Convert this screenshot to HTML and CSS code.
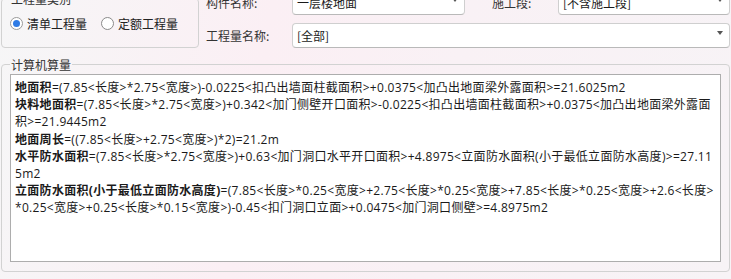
FILE: index.html
```html
<!DOCTYPE html>
<html lang="zh-CN">
<head>
    <meta charset="UTF-8">
    <meta name="viewport" content="width=device-width, initial-scale=1.0">
    <title>计算机算量</title>
    <link rel="stylesheet" href="styles.css">
</head>
<body>
    <div class="top">
        <fieldset class="group kind">
            <legend>工程量类别</legend>
            <div class="radios">
                <label class="radio checked"><span class="dot"></span>清单工程量</label>
                <label class="radio"><span class="dot"></span>定额工程量</label>
            </div>
        </fieldset>

        <div class="fields">
            <span class="label">构件名称:</span>
            <div class="combo part"><span>一层楼地面</span><i class="arrow"></i></div>
            <span class="label stage-label">施工段:</span>
            <div class="combo stage"><span>[不含施工段]</span><i class="arrow"></i></div>

            <span class="label">工程量名称:</span>
            <div class="combo wide"><span>[全部]</span><i class="arrow"></i></div>
        </div>
    </div>

    <fieldset class="group calc">
        <legend>计算机算量</legend>
        <div class="output">
            <p><b>地面积</b>=(7.85&lt;长度&gt;*2.75&lt;宽度&gt;)-0.0225&lt;扣凸出墙面柱截面积&gt;+0.0375&lt;加凸出地面梁外露面积&gt;=21.6025m2</p>
            <p><b>块料地面积</b>=(7.85&lt;长度&gt;*2.75&lt;宽度&gt;)+0.342&lt;加门侧壁开口面积&gt;-0.0225&lt;扣凸出墙面柱截面积&gt;+0.0375&lt;加凸出地面梁外露面积&gt;=21.9445m2</p>
            <p><b>地面周长</b>=((7.85&lt;长度&gt;+2.75&lt;宽度&gt;)*2)=21.2m</p>
            <p><b>水平防水面积</b>=(7.85&lt;长度&gt;*2.75&lt;宽度&gt;)+0.63&lt;加门洞口水平开口面积&gt;+4.8975&lt;立面防水面积(小于最低立面防水高度)&gt;=27.115m2</p>
            <p><b>立面防水面积(小于最低立面防水高度)</b>=(7.85&lt;长度&gt;*0.25&lt;宽度&gt;+2.75&lt;长度&gt;*0.25&lt;宽度&gt;+7.85&lt;长度&gt;*0.25&lt;宽度&gt;+2.6&lt;长度&gt;*0.25&lt;宽度&gt;+0.25&lt;长度&gt;*0.15&lt;宽度&gt;)-0.45&lt;扣门洞口立面&gt;+0.0475&lt;加门洞口侧壁&gt;=4.8975m2</p>
        </div>
    </fieldset>
</body>
</html>
```

FILE: styles.css
```css
body {
    margin: 0;
    width: 731px;
    height: 279px;
    overflow: hidden;
    font-family: 'Noto Sans CJK SC', 'Liberation Sans', sans-serif;
    font-size: 12px;
    line-height: 17px;
    color: #1a1a1a;
    background: linear-gradient(100deg, #f6f6f7 0%, #fbeff4 35%, #f9f1f5 60%, #f7f3f6 100%);
}

.top {
    display: flex;
    gap: 7px;
    margin-top: -10px;
}

.group {
    margin: 0;
    border: 1px solid #d2d2d2;
    border-radius: 4px;
    padding: 0 8px;
}

.group legend {
    padding: 0 1px;
    color: #333;
    line-height: 17px;
}

.kind {
    width: 180px;
    margin-left: 1px;
    padding-top: 8px;
    padding-bottom: 13px;
}

.radios {
    display: flex;
    gap: 14px;
}

.radio {
    display: flex;
    align-items: center;
    gap: 4px;
    color: #222;
}

.dot {
    width: 11px;
    height: 11px;
    border: 1px solid #8a8a8a;
    border-radius: 50%;
    background: #fff;
    display: flex;
    align-items: center;
    justify-content: center;
}

.radio.checked .dot {
    border-color: #9a9a9a;
}

.radio.checked .dot::after {
    content: "";
    width: 7px;
    height: 7px;
    border-radius: 50%;
    background: #2f7be5;
}

.fields {
    flex: 1;
    display: grid;
    grid-template-columns: 86px 173px 27px 66px 1fr;
    row-gap: 8px;
    align-items: center;
    margin-right: 1px;
}

.label {
    color: #333;
}

.stage-label {
    grid-column: 4;
}

.combo {
    height: 23px;
    border: 1px solid #cfcfcf;
    border-bottom-color: #b9b9b9;
    border-radius: 4px;
    background: #fff;
    display: flex;
    align-items: center;
    justify-content: space-between;
    padding: 0 6px 0 4px;
    color: #1a1a1a;
}

.combo.stage {
    grid-column: 5;
}

.combo.wide {
    grid-column: 2 / 6;
}

.arrow {
    width: 0;
    height: 0;
    border-left: 3px solid transparent;
    border-right: 3px solid transparent;
    border-top: 4px solid #555;
    margin-bottom: 6px;
}

.calc {
    margin: 8px 0 0 1px;
    width: 711px;
    padding-top: 1px;
    padding-bottom: 9px;
}

.output {
    height: 182px;
    border: 1px solid #adadad;
    background: #fff;
    padding: 4px 4px 0 4px;
    font-family: 'Open Sans', 'Noto Sans CJK SC', sans-serif;
    line-height: 17.2px;
    letter-spacing: 0.3px;
    word-break: break-all;
}

.output p {
    margin: 0;
}

.output b {
    font-weight: bold;
}
```
